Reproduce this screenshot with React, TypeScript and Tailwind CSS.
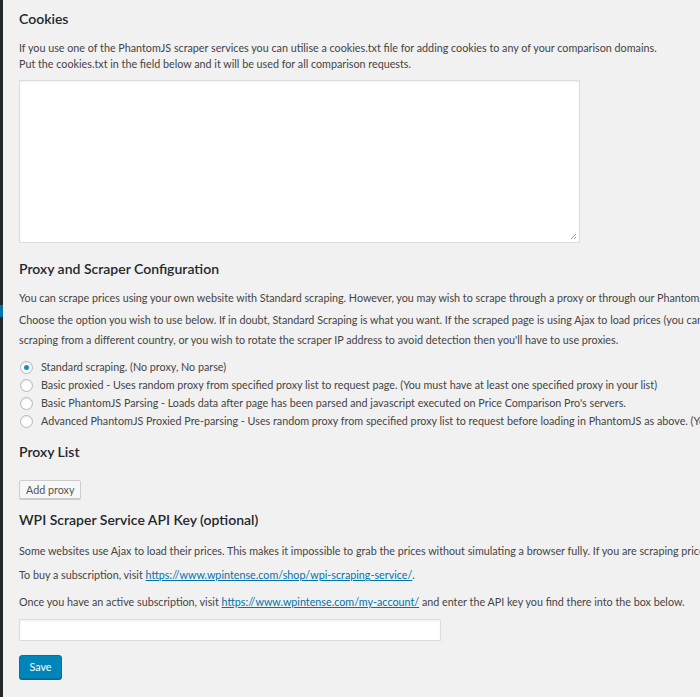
import React from 'react'

const font = { fontFamily: 'Lato, "Open Sans", sans-serif' }

function Radio({ checked, label }: { checked?: boolean; label: string }) {
  return (
    <label className="flex items-center gap-[8px] h-[18px] whitespace-nowrap">
      <span className="w-[13px] h-[13px] shrink-0 rounded-full border border-[#b4b9be] bg-white shadow-[inset_0_1px_2px_rgba(0,0,0,0.1)] flex items-center justify-center">
        {checked && <span className="w-[5px] h-[5px] rounded-full bg-[#1e8cbe]" />}
      </span>
      <span>{label}</span>
    </label>
  )
}

export default function App() {
  return (
    <div className="flex w-[700px] h-[697px] overflow-hidden bg-[#f1f1f1] text-[#444] text-[10.75px] leading-[16px]" style={font}>
      {/* admin menu edge */}
      <div className="w-[3px] shrink-0 bg-[#23282d] flex flex-col">
        <div className="h-[305px]" />
        <div className="h-[12px] bg-[#0073aa]" />
      </div>

      <div className="flex-1 min-w-0 pl-[16px] pt-[9px]">
        <h2 className="text-[14px] leading-[20px] font-semibold text-[#23282d]">Cookies</h2>
        <p className="mt-[11px] whitespace-nowrap">
          If you use one of the PhantomJS scraper services you can utilise a cookies.txt file for adding cookies to any of your comparison domains.
          <br />
          Put the cookies.txt in the field below and it will be used for all comparison requests.
        </p>

        <div className="relative mt-[8px] w-[561px] h-[163px] bg-white border border-[#ddd] shadow-[inset_0_1px_2px_rgba(0,0,0,0.07)]">
          <svg className="absolute right-[2px] bottom-[2px]" width="7" height="7" viewBox="0 0 7 7">
            <path d="M6 1L1 6M6 4L4 6" stroke="#999" strokeWidth="1" />
          </svg>
        </div>

        <h2 className="mt-[16px] text-[14px] leading-[20px] font-semibold text-[#23282d]">Proxy and Scraper Configuration</h2>
        <p className="mt-[11px] whitespace-nowrap">
          You can scrape prices using your own website with Standard scraping. However, you may wish to scrape through a proxy or through our PhantomJS servers.
        </p>
        <p className="mt-[4px] leading-[20px] whitespace-nowrap">
          Choose the option you wish to use below. If in doubt, Standard Scraping is what you want. If the scraped page is using Ajax to load prices (you can tell this by
          <br />
          scraping from a different country, or you wish to rotate the scraper IP address to avoid detection then you'll have to use proxies.
        </p>

        <div className="mt-[8px] ml-[1px] flex flex-col">
          <Radio checked label="Standard scraping. (No proxy, No parse)" />
          <Radio label="Basic proxied - Uses random proxy from specified proxy list to request page. (You must have at least one specified proxy in your list)" />
          <Radio label="Basic PhantomJS Parsing - Loads data after page has been parsed and javascript executed on Price Comparison Pro's servers." />
          <Radio label="Advanced PhantomJS Proxied Pre-parsing - Uses random proxy from specified proxy list to request before loading in PhantomJS as above. (You must have at least one proxy)" />
        </div>

        <h2 className="mt-[12px] text-[14px] leading-[20px] font-semibold text-[#23282d]">Proxy List</h2>

        <button className="mt-[18px] h-[19px] px-[6px] border border-[#ccc] bg-[#f7f7f7] text-[#555] text-[10.75px] leading-[17px] rounded-[2px] shadow-[0_1px_0_#ccc]">
          Add proxy
        </button>

        <h2 className="mt-[11px] text-[14px] leading-[20px] font-semibold text-[#23282d]">WPI Scraper Service API Key (optional)</h2>
        <p className="mt-[13px] whitespace-nowrap">
          Some websites use Ajax to load their prices. This makes it impossible to grab the prices without simulating a browser fully. If you are scraping prices from such sites you will need this.
        </p>
        <p className="mt-[8px] whitespace-nowrap">
          To buy a subscription, visit{' '}
          <a href="#" className="text-[#0073aa] underline">https://www.wpintense.com/shop/wpi-scraping-service/</a>.
        </p>
        <p className="mt-[11px] whitespace-nowrap">
          Once you have an active subscription, visit{' '}
          <a href="#" className="text-[#0073aa] underline">https://www.wpintense.com/my-account/</a> and enter the API key you find there into the box below.
        </p>

        <input type="text" className="block mt-[9px] w-[422px] h-[22px] bg-white border border-[#ddd] shadow-[inset_0_1px_2px_rgba(0,0,0,0.07)] outline-none" />

        <button className="mt-[14px] h-[24px] w-[43px] bg-[#0085ba] border border-[#0073aa] text-white text-[10.75px] rounded-[3px] shadow-[0_1px_0_#006799]">
          Save
        </button>
      </div>
    </div>
  )
}
